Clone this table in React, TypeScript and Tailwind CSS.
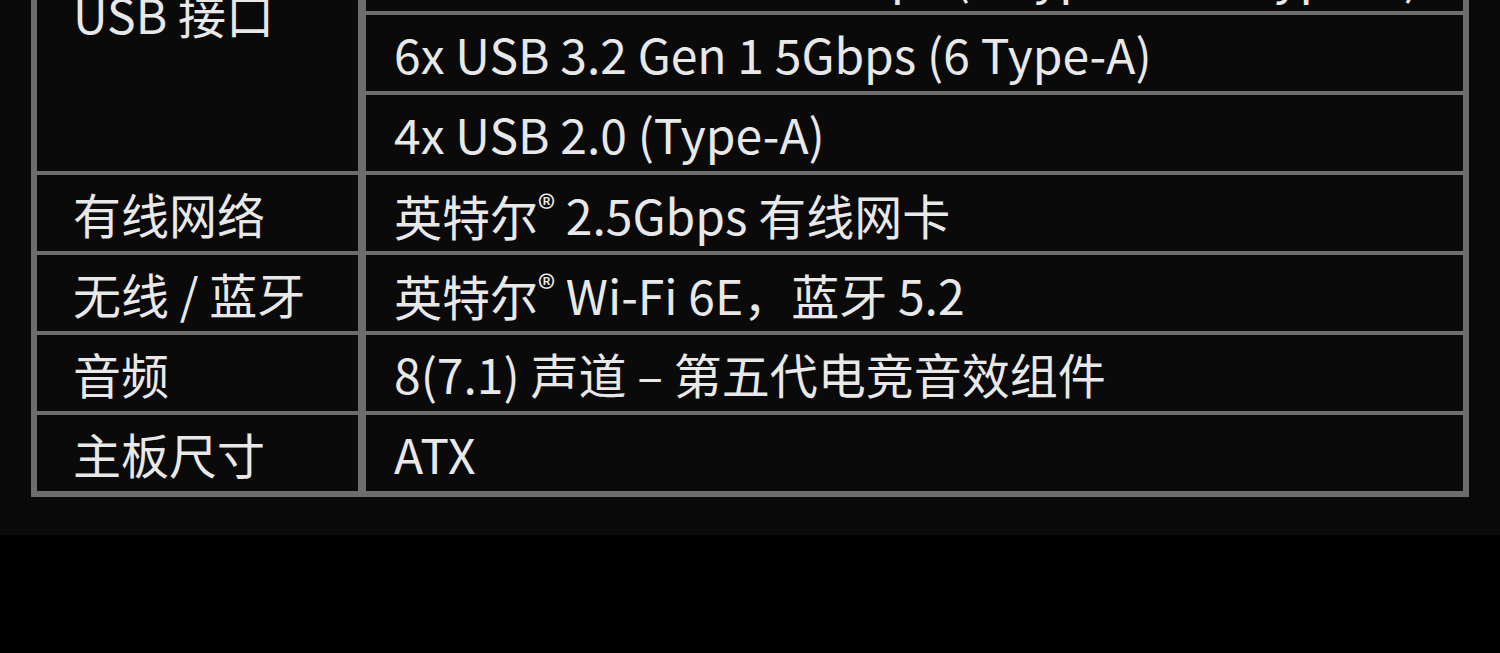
const FONT = "font-['Noto_Sans_CJK_SC','Noto_Sans',sans-serif]";

const USB_PORTS = [
  "1x USB 3.2 Gen 2x2 20Gbps (1 Type-C)",
  "4x USB 3.2 Gen 2 10Gbps (3 Type-A + 1 Type-C)",
  "6x USB 3.2 Gen 1 5Gbps (6 Type-A)",
  "4x USB 2.0 (Type-A)",
];

const SPECS = [
  { label: "有线网络", value: "英特尔® 2.5Gbps 有线网卡" },
  { label: "无线 / 蓝牙", value: "英特尔® Wi-Fi 6E，蓝牙 5.2" },
  { label: "音频", value: "8(7.1) 声道 – 第五代电竞音效组件" },
  { label: "主板尺寸", value: "ATX" },
];

function Value({ text }: { text: string }) {
  // raise the ® like the reference
  const parts = text.split("®");
  return (
    <span className="whitespace-pre">
      {parts.map((p, i) => (
        <span key={i}>
          {p}
          {i < parts.length - 1 && <span className="align-[0.4em] text-[36px]">®</span>}
        </span>
      ))}
    </span>
  );
}

export default function App() {
  return (
    <div className={`h-[653px] w-[1500px] overflow-hidden bg-black ${FONT}`}>
      <div className="h-[535px] overflow-hidden bg-[#0a0a0a]">
        <div className="ml-[31px] mt-[-151px] grid w-[1438px] grid-cols-[321px_1fr] gap-x-[8px] gap-y-[4px] border-[6px] border-[#6d6d6d] bg-[#6d6d6d] text-[48px] leading-none text-[#e8e8e8]">
          {/* USB block */}
          <div className="row-span-4 flex items-center bg-[#0a0a0a] pl-[36px]">USB 接口</div>
          {USB_PORTS.map((u) => (
            <div key={u} className="flex h-[76px] items-center bg-[#0a0a0a] pl-[28px]">
              {u}
            </div>
          ))}

          {SPECS.map((s) => (
            <div key={s.label} className="contents">
              <div className="flex h-[76px] items-center bg-[#0a0a0a] pl-[36px]">{s.label}</div>
              <div className="flex h-[76px] items-center bg-[#0a0a0a] pl-[28px]">
                <Value text={s.value} />
              </div>
            </div>
          ))}
        </div>
      </div>
    </div>
  );
}
